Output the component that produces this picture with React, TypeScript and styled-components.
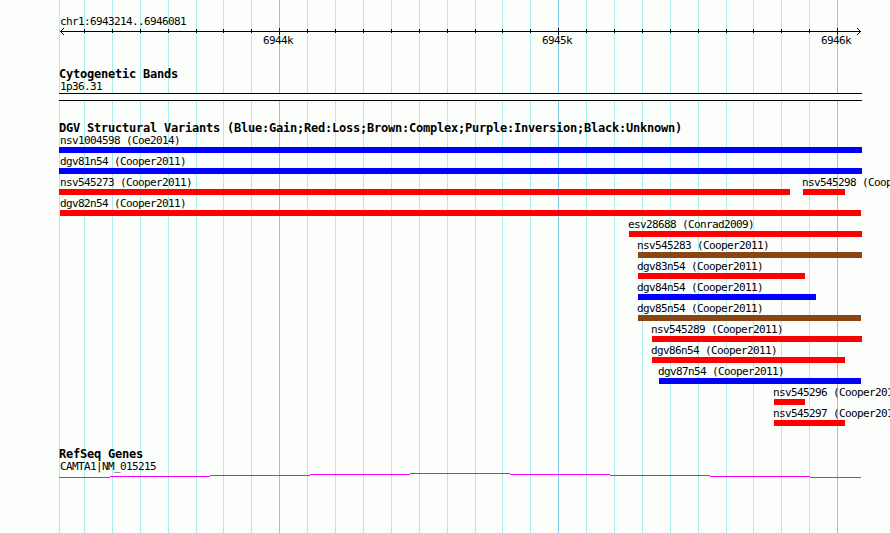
import styled, { createGlobalStyle } from "styled-components";

const GlobalStyle = createGlobalStyle`
  body {
    margin: 0;
    background-color: #fcfefc;
    overflow: hidden;
  }
`;

const LEFT = 59;
const WIDTH = 803;

const Browser = styled.div`
  position: relative;
  box-sizing: border-box;
  width: 890px;
  height: 533px;
  padding: 15px 0 0 ${LEFT}px;
  overflow: hidden;
  color: #000;
  font-family: "DejaVu Sans Mono", monospace;
`;

const GridLayer = styled.div`
  position: absolute;
  inset: 0;
  display: flex;
`;

const GridLine = styled.div<{ $gap: number; $major: boolean }>`
  flex: none;
  width: 1px;
  margin-left: ${({ $gap }) => $gap}px;
  background-color: ${({ $major }) => ($major ? "#84cdec" : "#aceeec")};
`;

const Content = styled.div`
  position: relative;
  display: flex;
  flex-direction: column;
`;

const Label = styled.div`
  height: 13px;
  padding-left: 1px;
  font-size: 11px;
  line-height: 13px;
  letter-spacing: -0.622px;
  white-space: pre;
`;

const Title = styled.div`
  height: 13px;
  font-size: 12px;
  font-weight: bold;
  line-height: 14px;
  letter-spacing: -0.224px;
  white-space: pre;
`;

const AxisLine = styled.svg`
  display: block;
  height: 6px;
  overflow: visible;
`;

const AxisLabels = styled.div`
  display: flex;
`;

const AxisLabel = styled(Label)<{ $gap: number }>`
  box-sizing: border-box;
  width: 30px;
  margin-left: ${({ $gap }) => $gap}px;
  padding: 0;
`;

const Track = styled.section<{ $space: number }>`
  margin-top: ${({ $space }) => $space}px;
`;

const Band = styled.div`
  box-sizing: border-box;
  width: ${WIDTH}px;
  height: 8px;
  border: solid #000;
  border-width: 1px 0;
  background-color: #fcfefc;
`;

const Rows = styled.div`
  display: flex;
  flex-direction: column;
  gap: 2px;
`;

const Row = styled.div`
  display: flex;
`;

const Feature = styled.div<{ $gap: number; $width: number }>`
  flex: none;
  width: ${({ $width }) => $width}px;
  margin-left: ${({ $gap }) => $gap}px;
`;

const FeatureLabel = styled(Label)<{ $shift: number }>`
  padding: 0;
  margin-left: ${({ $shift }) => $shift}px;
`;

const Bar = styled.div<{ $color: string }>`
  height: 6px;
  background-color: ${({ $color }) => $color};
`;

const GeneLine = styled.svg`
  display: block;
  overflow: visible;
`;

const gridLines = [
  59, 84, 112, 140, 168, 196, 223, 251, 279, 307, 335, 363, 391, 419, 447, 475,
  502, 530, 558, 586, 614, 642, 670, 698, 726, 753, 781, 809, 837,
];
const majorLines = [279, 558, 837];
const axisLabels = ["6944k", "6945k", "6946k"];

const colors = {
  gain: "#0000ff",
  loss: "#ff0000",
  complex: "#8b4513",
};

interface Variant {
  name: string;
  start: number;
  end: number;
  type: keyof typeof colors;
}

const variantRows: Variant[][] = [
  [{ name: "nsv1004598 (Coe2014)", start: 59, end: 862, type: "gain" }],
  [{ name: "dgv81n54 (Cooper2011)", start: 59, end: 862, type: "gain" }],
  [
    { name: "nsv545273 (Cooper2011)", start: 59, end: 790, type: "loss" },
    { name: "nsv545298 (Cooper2011)", start: 803, end: 845, type: "loss" },
  ],
  [{ name: "dgv82n54 (Cooper2011)", start: 60, end: 861, type: "loss" }],
  [{ name: "esv28688 (Conrad2009)", start: 629, end: 862, type: "loss" }],
  [{ name: "nsv545283 (Cooper2011)", start: 638, end: 862, type: "complex" }],
  [{ name: "dgv83n54 (Cooper2011)", start: 638, end: 805, type: "loss" }],
  [{ name: "dgv84n54 (Cooper2011)", start: 638, end: 816, type: "gain" }],
  [{ name: "dgv85n54 (Cooper2011)", start: 638, end: 861, type: "complex" }],
  [{ name: "nsv545289 (Cooper2011)", start: 652, end: 862, type: "loss" }],
  [{ name: "dgv86n54 (Cooper2011)", start: 652, end: 845, type: "loss" }],
  [{ name: "dgv87n54 (Cooper2011)", start: 659, end: 861, type: "gain" }],
  [{ name: "nsv545296 (Cooper2011)", start: 774, end: 805, type: "loss" }],
  [{ name: "nsv545297 (Cooper2011)", start: 774, end: 845, type: "loss" }],
];

// [start, end, y] of each step of the intron line
const geneSteps = [
  [0, 51, 4],
  [51, 151, 3],
  [151, 251, 2],
  [251, 351, 1],
  [351, 451, 0],
  [451, 551, 1],
  [551, 651, 2],
  [651, 751, 3],
  [751, 802, 4],
];

const Grid = () => (
  <GridLayer>
    {gridLines.map((x, i) => (
      <GridLine
        key={x}
        $gap={i === 0 ? x : x - gridLines[i - 1] - 1}
        $major={majorLines.includes(x)}
      />
    ))}
  </GridLayer>
);

const Axis = () => (
  <>
    <AxisLine width={WIDTH} height={6} shapeRendering="crispEdges">
      <rect x={1} y={3} width={801} height={1} />
      {gridLines.slice(1).map((x) => {
        const major = majorLines.includes(x);
        return (
          <rect
            key={x}
            x={x - LEFT}
            y={major ? 0 : 1}
            width={1}
            height={major ? 7 : 4}
          />
        );
      })}
      {[1, 2, 3].map((n) => (
        <g key={n}>
          <rect x={1 + n} y={3 - n} width={1} height={1} />
          <rect x={1 + n} y={3 + n} width={1} height={1} />
          <rect x={801 - n} y={3 - n} width={1} height={1} />
          <rect x={801 - n} y={3 + n} width={1} height={1} />
        </g>
      ))}
    </AxisLine>
    <AxisLabels>
      {axisLabels.map((label, i) => (
        <AxisLabel key={label} $gap={i === 0 ? 204 : 249}>
          {label}
        </AxisLabel>
      ))}
    </AxisLabels>
  </>
);

const VariantRow = ({ variants }: { variants: Variant[] }) => (
  <Row>
    {variants.map(({ name, start, end, type }, i) => (
      <Feature
        key={name}
        $gap={start - (i === 0 ? LEFT : variants[i - 1].end)}
        $width={end - start}
      >
        <FeatureLabel $shift={Math.max(60, start - 1) - start}>
          {name}
        </FeatureLabel>
        <Bar $color={colors[type]} />
      </Feature>
    ))}
  </Row>
);

export default function App() {
  return (
    <>
      <GlobalStyle />
      <Browser>
        <Grid />
        <Content>
          <Label>chr1:6943214..6946081</Label>
          <Axis />
          <Track $space={20}>
            <Title>Cytogenetic Bands</Title>
            <Label>1p36.31</Label>
            <Band />
          </Track>
          <Track $space={20}>
            <Title>
              DGV Structural Variants
              (Blue:Gain;Red:Loss;Brown:Complex;Purple:Inversion;Black:Unknown)
            </Title>
            <Rows>
              {variantRows.map((variants) => (
                <VariantRow key={variants[0].name} variants={variants} />
              ))}
            </Rows>
          </Track>
          <Track $space={21}>
            <Title>RefSeq Genes</Title>
            <Label>CAMTA1|NM_015215</Label>
            <GeneLine width={WIDTH} height={5} shapeRendering="crispEdges">
              {geneSteps.map(([start, end, y]) => (
                <rect
                  key={start}
                  x={start}
                  y={y}
                  width={end - start}
                  height={1}
                  fill="#ff00ff"
                />
              ))}
            </GeneLine>
          </Track>
        </Content>
      </Browser>
    </>
  );
}
